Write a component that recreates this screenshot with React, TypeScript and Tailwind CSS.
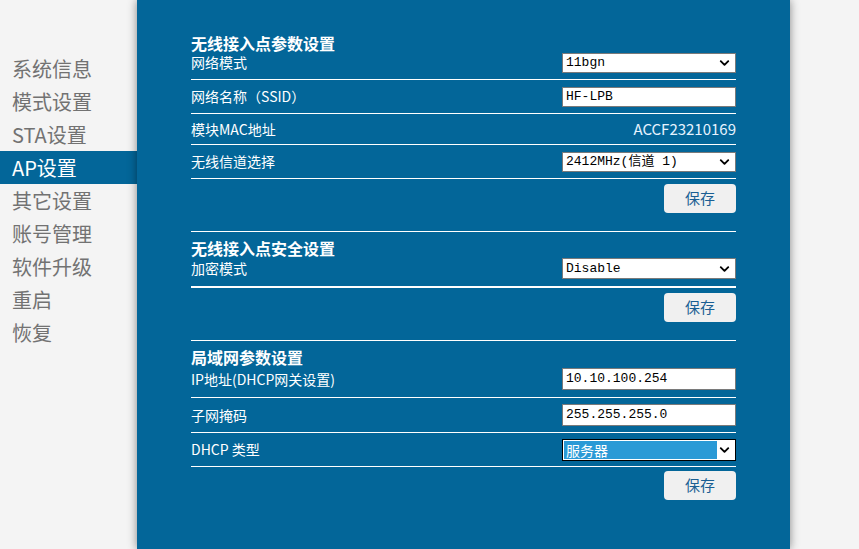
import { ChevronDown } from "lucide-react"

const menu = ["系统信息", "模式设置", "STA设置", "AP设置", "其它设置", "账号管理", "软件升级", "重启", "恢复"]

const cjk = "font-['Microsoft_YaHei','Noto_Sans_CJK_SC',sans-serif]"
const mono = "font-['Liberation_Mono','Noto_Sans_CJK_SC',monospace]"

function Select({ value, h = "h-[20px]" }: { value: string; h?: string }) {
  return (
    <div className={`relative w-[174px] ${h} bg-white border border-[#7a7a7a] flex items-center`}>
      <span className={`${mono} text-[13px] text-black pl-[3px]`}>{value}</span>
      <ChevronDown className="absolute right-[3px] top-1/2 -translate-y-1/2 w-[15px] h-[15px] text-black" strokeWidth={3} />
    </div>
  )
}

function Input({ value, h = "h-[20px]" }: { value: string; h?: string }) {
  return (
    <div className={`w-[174px] ${h} bg-white border border-[#7a7a7a] flex items-center`}>
      <span className={`${mono} text-[13px] text-black pl-[3px]`}>{value}</span>
    </div>
  )
}

function SaveButton({ mt }: { mt: string }) {
  return (
    <div className={`flex justify-end ${mt}`}>
      <button className={`w-[72px] h-[29px] bg-[#f0f0f0] rounded-[4px] text-[15px] text-[#1a5f93] ${cjk}`}>保存</button>
    </div>
  )
}

export default function App() {
  return (
    <div className={`flex h-screen bg-[#f4f4f4] ${cjk} overflow-hidden`}>
      <aside className="w-[137px] shrink-0 pt-[52px]">
        {menu.map((m) => (
          <div
            key={m}
            className={`h-[33px] leading-[33px] pl-[12px] text-[20px] ${
              m === "AP设置" ? "bg-[#036699] text-white" : "text-[#727272]"
            }`}
          >
            {m}
          </div>
        ))}
      </aside>

      <main className="w-[653px] shrink-0 bg-[#036699] shadow-[0_0_9px_rgba(0,0,0,0.45)] pl-[54px] pt-[33px]">
        <div className="w-[545px] text-white">
          {/* 无线接入点参数设置 */}
          <h2 className="text-[16px] font-bold leading-[20px]">无线接入点参数设置</h2>
          <div className="h-[27px] flex items-start justify-between border-b border-white">
            <span className="text-[14px] leading-[19px]">网络模式</span>
            <Select value="11bgn" />
          </div>
          <div className="h-[34px] flex items-center justify-between border-b border-white">
            <span className="text-[14px]">网络名称（SSID）</span>
            <Input value="HF-LPB" />
          </div>
          <div className="h-[31px] flex items-center justify-between border-b border-white">
            <span className="text-[14px]">模块MAC地址</span>
            <span className="text-[15px] text-[#e6f3ff]">ACCF23210169</span>
          </div>
          <div className="h-[34px] flex items-center justify-between border-b border-white">
            <span className="text-[14px]">无线信道选择</span>
            <Select value="2412MHz(信道 1)" />
          </div>
          <SaveButton mt="mt-[5px]" />

          {/* 无线接入点安全设置 */}
          <div className="mt-[18px] border-t border-white pt-[6px]">
            <h2 className="text-[16px] font-bold leading-[20px]">无线接入点安全设置</h2>
            <div className="h-[30px] flex items-start justify-between border-b-2 border-white">
              <span className="text-[14px] leading-[20px]">加密模式</span>
              <Select value="Disable" h="h-[21px]" />
            </div>
            <SaveButton mt="mt-[5px]" />
          </div>

          {/* 局域网参数设置 */}
          <div className="mt-[18px] border-t border-white pt-[6px]">
            <h2 className="text-[16px] font-bold leading-[20px]">局域网参数设置</h2>
            <div className="h-[31px] flex items-start justify-between border-b border-white pt-[1px]">
              <span className="text-[14px] leading-[22px]">IP地址(DHCP网关设置)</span>
              <Input value="10.10.100.254" h="h-[22px]" />
            </div>
            <div className="h-[35px] flex items-center justify-between border-b border-white">
              <span className="text-[14px]">子网掩码</span>
              <Input value="255.255.255.0" h="h-[22px]" />
            </div>
            <div className="h-[34px] flex items-center justify-between border-b border-white">
              <span className="text-[14px]">DHCP 类型</span>
              <div className="relative w-[174px] h-[22px] bg-white border border-black flex items-stretch p-[1px]">
                <div className="w-[153px] bg-[#2a9ad6] flex items-center">
                  <span className="text-[14px] text-white pl-[2px] leading-none">服务器</span>
                </div>
                <ChevronDown className="absolute right-[3px] top-1/2 -translate-y-1/2 w-[15px] h-[15px] text-black" strokeWidth={3} />
              </div>
            </div>
            <SaveButton mt="mt-[4px]" />
          </div>
        </div>
      </main>

      <div className="flex-1" />
    </div>
  )
}
